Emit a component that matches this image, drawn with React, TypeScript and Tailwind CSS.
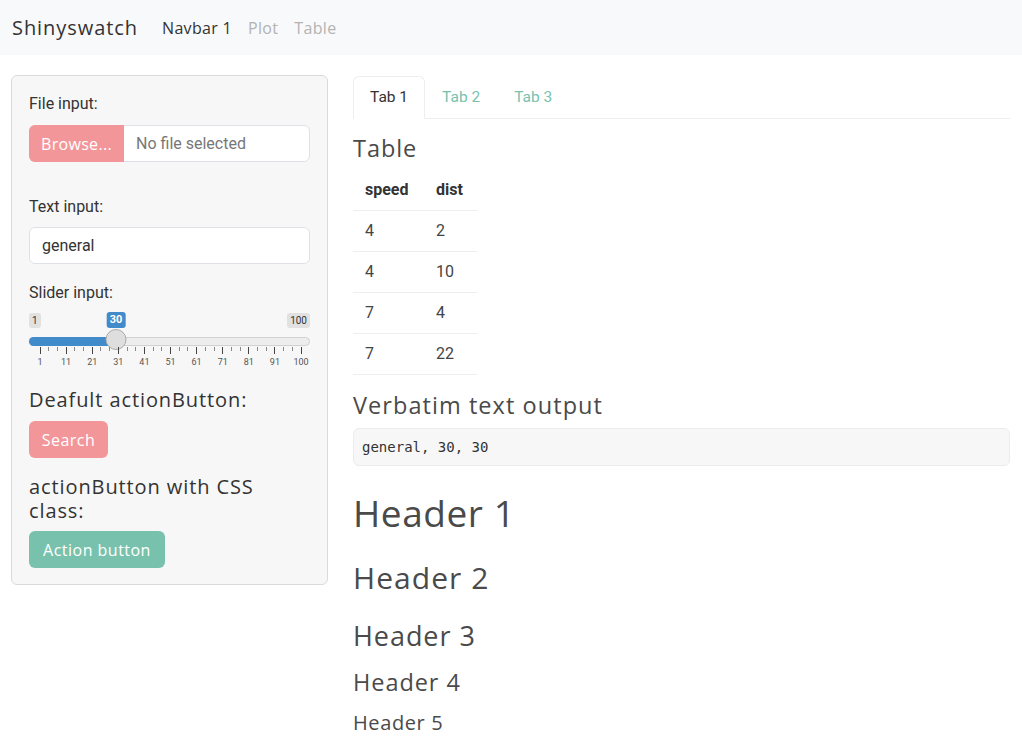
import React from 'react';

const HEAD = "font-['Open_Sans',sans-serif]";

function NavLink({ text, active }: { text: string; active?: boolean }) {
  return (
    <a
      href="#"
      className={`${HEAD} px-2 text-[16px] leading-6 tracking-[0.02em] ${active ? 'text-[#333]' : 'text-[#b3b3b3]'}`}
    >
      {text}
    </a>
  );
}

function Slider() {
  const start = 10.5;
  const span = 261;
  const labels = ['1', '11', '21', '31', '41', '51', '61', '71', '81', '91', '100'];
  const pos = start + (29 / 99) * span;
  const ticks = Array.from({ length: 31 }, (_, i) => i);

  return (
    <div className="relative h-[58px] w-full">
      <span className="absolute left-0 top-[1px] rounded-[3px] bg-[#e1e1e1] px-[3px] text-[10px] leading-[15px] text-[#333]">
        1
      </span>
      <span className="absolute right-0 top-[1px] rounded-[3px] bg-[#e1e1e1] px-[3px] text-[10px] leading-[15px] text-[#333]">
        100
      </span>
      <span
        className="absolute top-0 -translate-x-1/2 rounded-[3px] bg-[#428bca] px-[3px] text-[11px] font-bold leading-[16px] text-white"
        style={{ left: pos }}
      >
        30
      </span>
      <div className="absolute left-0 right-0 top-[25px] h-[9px] rounded-full border border-[#d2d2d2] bg-[#ededed]" />
      <div
        className="absolute left-0 top-[25px] h-[9px] rounded-l-full bg-[#428bca]"
        style={{ width: pos }}
      />
      <div
        className="absolute top-[17px] h-[21px] w-[21px] -translate-x-1/2 rounded-full border border-[#ababab] bg-[#dedede]"
        style={{ left: pos }}
      />
      {ticks.map((i) => (
        <div
          key={i}
          className={`absolute top-[35px] w-px ${i % 3 === 0 ? 'h-[7px] bg-[#444]' : 'h-[4px] bg-[#888]'}`}
          style={{ left: start + (i * span) / 30 }}
        />
      ))}
      {labels.map((l, i) => (
        <span
          key={l}
          className="absolute top-[44px] -translate-x-1/2 text-[9px] leading-[12px] text-[#555]"
          style={{ left: start + (i * span) / 10 + 0.5 }}
        >
          {l}
        </span>
      ))}
    </div>
  );
}

export default function App() {
  const rows = [
    [4, 2],
    [4, 10],
    [7, 4],
    [7, 22],
  ];

  return (
    <div className="min-h-screen bg-white font-['Roboto',sans-serif] text-[16px] text-[#444]">
      {/* Navbar */}
      <nav className="flex h-[55px] items-center bg-[#f8f9fa] pl-3">
        <span className={`${HEAD} mr-4 text-[20px] leading-7 tracking-[0.047em] text-[#333]`}>Shinyswatch</span>
        <NavLink text="Navbar 1" active />
        <NavLink text="Plot" />
        <NavLink text="Table" />
      </nav>

      <div className="flex gap-[25px] pl-[11px] pr-3 pt-5">
        {/* Sidebar */}
        <aside className="w-[317px] shrink-0 self-start rounded-[6px] border border-[#dadada] bg-[#f7f7f7] px-[17px] pb-4 pt-4">
          <label className="mb-[9px] block leading-6 text-[#333]">File input:</label>
          <div className="flex h-[37px] rounded-[6px] border border-[#dee2e6] bg-white">
            <span className={`${HEAD} -my-px -ml-px flex w-[95px] items-center justify-center rounded-l-[6px] bg-[#f3969a] tracking-[0.02em] text-white`}>
              Browse...
            </span>
            <span className="flex items-center px-3 text-[#777]">No file selected</span>
          </div>

          <label className="mb-2 mt-[33px] block leading-6 text-[#333]">Text input:</label>
          <div className="flex h-[37px] items-center rounded-[6px] border border-[#dee2e6] bg-white px-3 text-[#333]">
            general
          </div>

          <label className="mb-[7px] mt-[17px] block leading-6 text-[#333]">Slider input:</label>
          <Slider />

          <h5 className={`${HEAD} mb-[9px] mt-[18px] text-[20px] leading-6 tracking-[0.045em] text-[#333]`}>
            Deafult actionButton:
          </h5>
          <button className={`${HEAD} h-[37px] w-[79px] rounded-[6px] bg-[#f3969a] tracking-[0.03em] text-white`}>
            Search
          </button>

          <h5 className={`${HEAD} mb-2 mt-[17px] max-w-[250px] text-[20px] leading-6 tracking-[0.045em] text-[#333]`}>
            actionButton with CSS class:
          </h5>
          <button className={`${HEAD} h-[37px] w-[136px] rounded-[6px] bg-[#78c2ad] tracking-[0.03em] text-white`}>
            Action button
          </button>
        </aside>

        {/* Main */}
        <main className="min-w-0 flex-1">
          <div className="mt-px flex border-b border-[#eeeeee]">
            <span className="-mb-px rounded-t-[6px] border border-[#eeeeee] border-b-white bg-white px-4 py-2 text-[15.5px] leading-6 text-[#333]">
              Tab 1
            </span>
            <span className="border border-transparent px-4 py-2 text-[15.5px] leading-6 text-[#78c2ad]">Tab 2</span>
            <span className="border border-transparent px-4 py-2 text-[15.5px] leading-6 text-[#78c2ad]">Tab 3</span>
          </div>

          <h4 className={`${HEAD} mb-2 mt-[15px] text-[23.5px] leading-7 tracking-[0.04em] text-[#4a4a4a]`}>Table</h4>
          <table className="border-collapse">
            <thead>
              <tr className="border-b border-[#eeeeee]">
                <th className="w-[71px] px-3 py-2 text-left font-bold leading-6 text-[#333]">speed</th>
                <th className="w-[53px] px-3 py-2 text-left font-bold leading-6 text-[#333]">dist</th>
              </tr>
            </thead>
            <tbody>
              {rows.map((r, i) => (
                <tr key={i} className="border-b border-[#eeeeee]">
                  <td className="px-3 py-2 leading-6">{r[0]}</td>
                  <td className="px-3 py-2 leading-6">{r[1]}</td>
                </tr>
              ))}
            </tbody>
          </table>

          <h4 className={`${HEAD} mb-[9px] mt-4 text-[23.5px] leading-7 tracking-[0.045em] text-[#4a4a4a]`}>
            Verbatim text output
          </h4>
          <pre className="rounded-[6px] border border-[#ececec] bg-[#f7f7f7] px-2 py-2 font-['DejaVu_Sans_Mono',monospace] text-[14px] leading-5 text-[#333]">
            general, 30, 30
          </pre>

          <h1 className={`${HEAD} mt-[25px] text-[37px] leading-[44px] tracking-[0.015em] text-[#4a4a4a]`}>Header 1</h1>
          <h2 className={`${HEAD} mt-[25px] text-[30px] leading-[36px] tracking-[0.035em] text-[#4a4a4a]`}>Header 2</h2>
          <h3 className={`${HEAD} mt-[24px] text-[27px] leading-[32px] tracking-[0.035em] text-[#4a4a4a]`}>Header 3</h3>
          <h4 className={`${HEAD} mt-4 text-[23.5px] leading-7 tracking-[0.04em] text-[#4a4a4a]`}>Header 4</h4>
          <h5 className={`${HEAD} mt-[15px] text-[20px] leading-6 tracking-[0.03em] text-[#4a4a4a]`}>Header 5</h5>
        </main>
      </div>
    </div>
  );
}
